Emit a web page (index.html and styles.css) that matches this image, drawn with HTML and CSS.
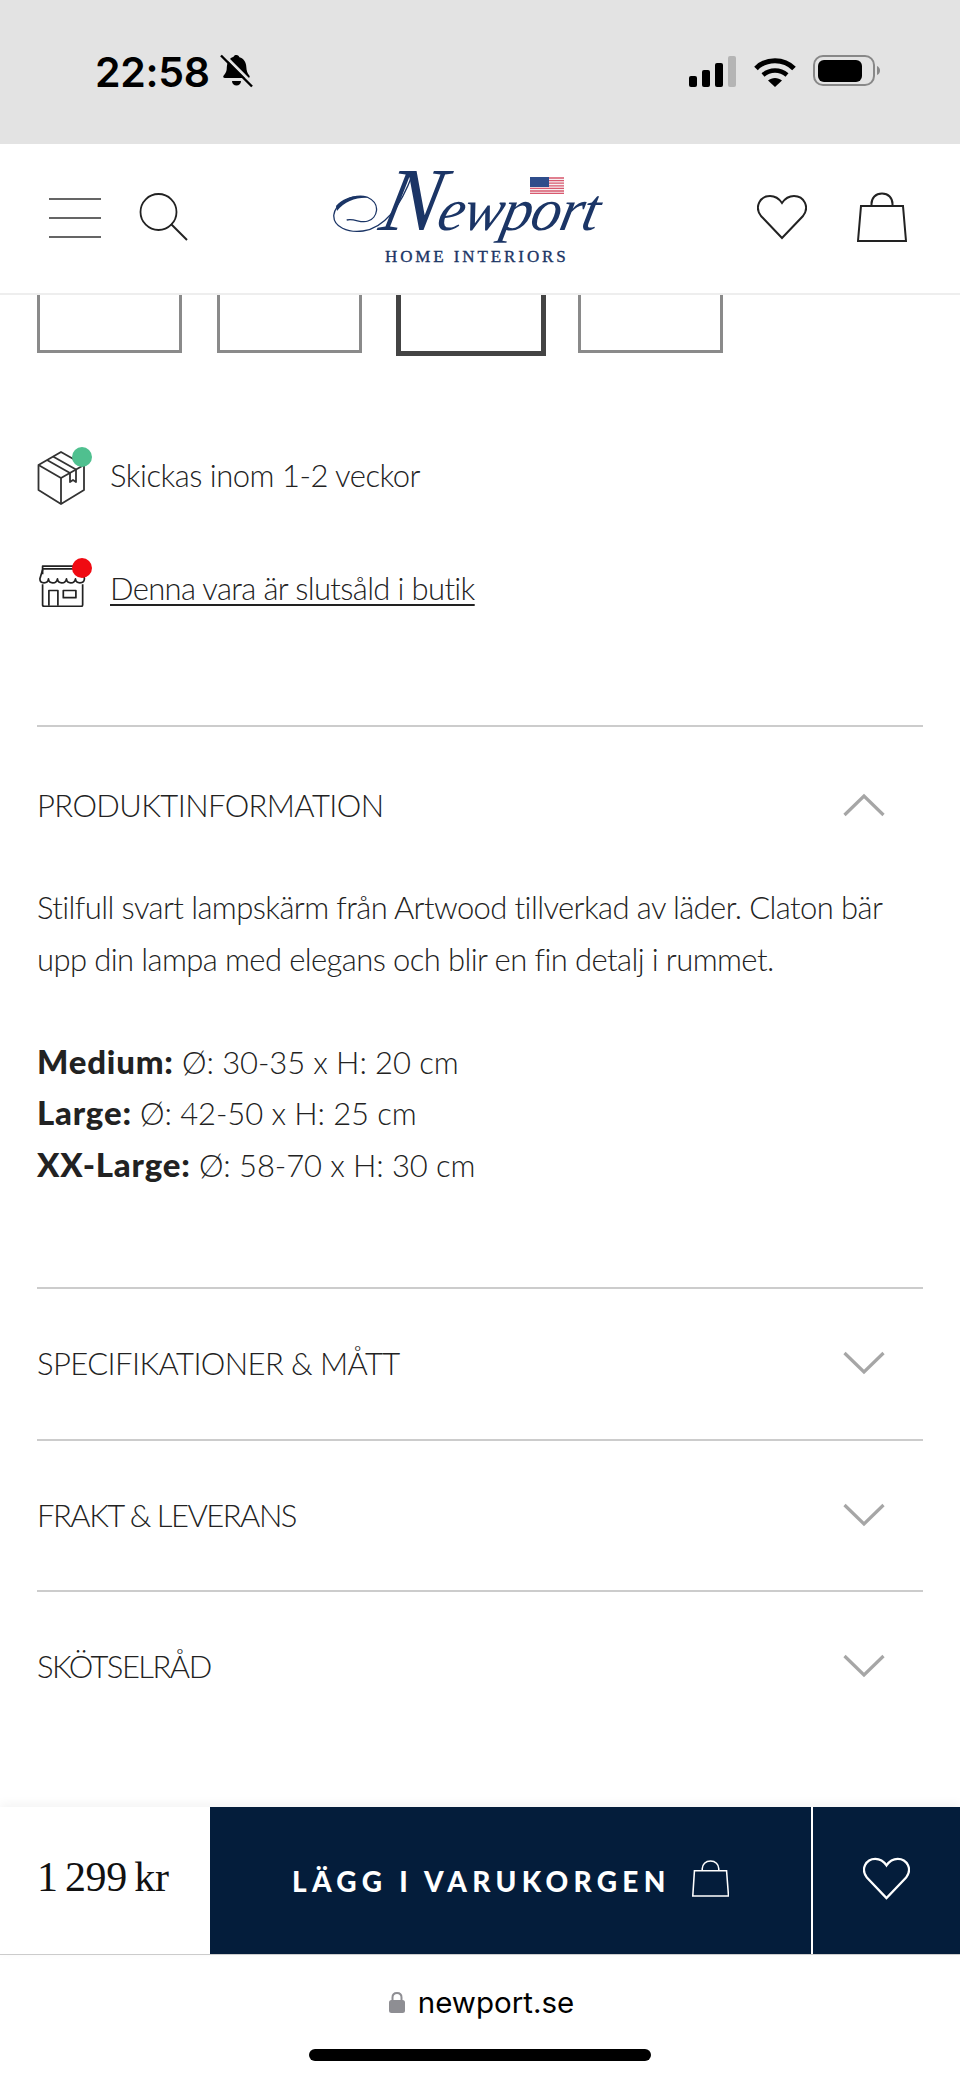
FILE: index.html
```html
<!DOCTYPE html>
<html lang="sv">
<head>
<meta charset="utf-8">
<title>Newport</title>
<link rel="stylesheet" href="styles.css">
</head>
<body>
<div class="page">
  <div class="status">
    <div class="status-left">
      <span class="time">22:58</span>
      <svg class="bell" viewBox="0 0 33 34"><path d="M16.500 1c1.600 0 2.600 1 2.900 2.300 4.300 1.200 6.600 4.900 6.900 9.500.2 4.200 1 6.400 3 8.800.8 1 .4 2.400-1 2.400H5c-1.700 0-2.300-1.400-1.300-2.500 1.800-2 2.700-3.600 3-6.200.3-3.500 0-10 6.900-12.500.3-1.300 1.300-1.800 2.900-1.800z" fill="#000"/><path d="M12 27h9c0 2.800-2 4.500-4.500 4.500S12 29.800 12 27z" fill="#000"/><path d="M3 0l31 31" stroke="#e3e3e3" stroke-width="3"/><path d="M1 1.500l31 31" stroke="#000" stroke-width="2.400"/></svg>
    </div>
    <div class="status-right">
      <svg class="signal" viewBox="0 0 48 31"><rect x="0" y="20" width="8" height="11" rx="2" fill="#000"/><rect x="13" y="14" width="8" height="17" rx="2" fill="#000"/><rect x="26" y="7" width="8" height="24" rx="2" fill="#000"/><rect x="39" y="0" width="8" height="31" rx="2" fill="#b5b5b5"/></svg>
      <svg class="wifi" viewBox="0 0 42 31"><path d="M2 12.500C12 2 30 2 40 12.500" fill="none" stroke="#000" stroke-width="5"/><path d="M9 19c7-6 17-6 24 0" fill="none" stroke="#000" stroke-width="4.500"/><path d="M14 24.500c4-3.500 10-3.500 14 0l-7 6.500z" fill="#000"/></svg>
      <svg class="battery" viewBox="0 0 67 32"><rect x="1" y="1" width="60" height="29" rx="9" fill="none" stroke="#888" stroke-width="2"/><rect x="5" y="5" width="44" height="22" rx="6" fill="#000"/><path d="M64 11c2 1 3 2.500 3 4.500S66 19 64 20z" fill="#888"/></svg>
    </div>
  </div>

  <header class="header">
    <div class="header-left">
      <svg class="menu-icon" viewBox="0 0 52 42"><path d="M0 1h52M0 20h52M0 39h52" stroke="#333" stroke-width="1.700"/></svg>
      <svg class="search-icon" viewBox="0 0 50 50"><circle cx="19.500" cy="19" r="18" fill="none" stroke="#222" stroke-width="1.800"/><path d="M32 31l16 16" stroke="#222" stroke-width="2"/></svg>
    </div>
    <div class="logo">
      <div class="logo-mark">
        <svg class="swash" viewBox="0 0 100 70"><path d="M13.700 49C22 47 28 53 35 50 44 47 49 33 34 26 20 22 2 33 .8 44 0 56 15 62 30 60 52 57 68 35 80 2" fill="none" stroke="#1b3566" stroke-width="1.300"/><path d="M3 35C12 25 26 23 36 27 24 26 12 30 4 40z" fill="#1b3566"/></svg>
        <span class="logo-name"><span class="logo-n">N</span>ewport</span>
        <svg class="flag" viewBox="0 0 34 17"><rect width="34" height="17" fill="#f6f0f2"/><path d="M0 1h34M0 3.600h34M0 6.200h34M0 8.800h34M0 11.400h34M0 14h34M0 16.400h34" stroke="#d9596f" stroke-width="1.300"/><rect width="19" height="10" fill="#2f4d8b"/></svg>
      </div>
      <div class="logo-sub">HOME INTERIORS</div>
    </div>
    <div class="header-right">
      <svg class="heart-icon" viewBox="0 0 50 46"><path d="M25 44L4 22C-3 13 3 2 13 2c5 0 9 2.500 12 7 3-4.500 7-7 12-7 10 0 16 11 9 20z" fill="none" stroke="#222" stroke-width="2"/></svg>
      <svg class="bag-icon" viewBox="0 0 50 50"><path d="M4 14h42l3 35H1z" fill="none" stroke="#222" stroke-width="2"/><path d="M14.500 14v-2c0-6 4-10.500 10.500-10.500S35.500 6 35.500 12v2" fill="none" stroke="#222" stroke-width="2"/></svg>
    </div>
  </header>

  <main class="main">
    <div class="thumbs">
      <div class="thumb"></div>
      <div class="thumb"></div>
      <div class="thumb thumb-active"></div>
      <div class="thumb"></div>
    </div>

    <div class="stock-row stock-first">
      <div class="stock-icon">
        <svg viewBox="0 0 54 60"><g fill="none" stroke="#333" stroke-width="1.800" stroke-linejoin="round"><path d="M24 5L1.500 18v25L24 57l23-14V18z"/><path d="M1.500 18L24 31l23-13M24 31v26"/><path d="M10 13l23 13M16 9.500l23 13"/><path d="M33 26v9l3-2 3 2v-12"/></g></svg>
        <span class="dot dot-green"></span>
      </div>
      <span class="stock-text">Skickas inom 1-2 veckor</span>
    </div>
    <div class="stock-row stock-second">
      <div class="stock-icon">
        <svg viewBox="0 0 54 60"><g transform="translate(2 -1) scale(.9)" fill="none" stroke="#222" stroke-width="1.900" stroke-linejoin="round"><path d="M4 17V8h44v9"/><path d="M4 11h44"/><path d="M4 12L1 22c0 6 9 6 9.500 0 .5 6 9 6 10 0 .5 6 9 6 10 0 .5 6 9 6 10 0 .5 6 9.500 6 10 0L48 12"/><path d="M4 28v23c0 1 1 1.500 2 1.500h41c1 0 1.500-.5 1.500-1.500V28"/><path d="M11 52V35h10v17"/><rect x="27" y="35" width="14" height="8"/></g></svg>
        <span class="dot dot-red"></span>
      </div>
      <a class="stock-text stock-link" href="#">Denna vara är slutsåld i butik</a>
    </div>

    <section class="acc acc-open">
      <div class="acc-head acc-head-open">
        <span class="acc-title">PRODUKTINFORMATION</span>
        <svg class="chev" viewBox="0 0 42 24"><path d="M1.500 22L21 3l19.500 19" fill="none" stroke="#a6a6a6" stroke-width="3.200"/></svg>
      </div>
      <div class="acc-body">
        <p class="para para-text">Stilfull svart lampskärm från Artwood tillverkad av läder. Claton bär<br>upp din lampa med elegans och blir en fin detalj i rummet.</p>
        <p class="para para-spec"><b>Medium:</b> Ø: 30-35 x H: 20 cm<br><b>Large:</b> Ø: 42-50 x H: 25 cm<br><b>XX-Large:</b> Ø: 58-70 x H: 30 cm</p>
      </div>
    </section>
    <section class="acc">
      <div class="acc-head">
        <span class="acc-title">SPECIFIKATIONER &amp; MÅTT</span>
        <svg class="chev" viewBox="0 0 42 24"><path d="M1.500 2L21 21 40.500 2" fill="none" stroke="#a6a6a6" stroke-width="3.200"/></svg>
      </div>
    </section>
    <section class="acc">
      <div class="acc-head">
        <span class="acc-title acc-title-tight">FRAKT &amp; LEVERANS</span>
        <svg class="chev" viewBox="0 0 42 24"><path d="M1.500 2L21 21 40.500 2" fill="none" stroke="#a6a6a6" stroke-width="3.200"/></svg>
      </div>
    </section>
    <section class="acc">
      <div class="acc-head">
        <span class="acc-title acc-title-tight">SKÖTSELRÅD</span>
        <svg class="chev" viewBox="0 0 42 24"><path d="M1.500 2L21 21 40.500 2" fill="none" stroke="#a6a6a6" stroke-width="3.200"/></svg>
      </div>
    </section>
  </main>

  <div class="buybar">
    <div class="price">1 299 kr</div>
    <div class="buy">
      <span class="buy-label">LÄGG I VARUKORGEN</span>
      <svg class="buy-bag" viewBox="0 0 38 38"><path d="M2.500 11h33l2 26H.8z" fill="none" stroke="#fff" stroke-width="1.600"/><path d="M10.500 11V9c0-4.500 3.500-8 8.500-8s8.500 3.500 8.500 8v2" fill="none" stroke="#fff" stroke-width="1.600"/></svg>
    </div>
    <div class="wish">
      <svg class="wish-heart" viewBox="0 0 50 46"><path d="M25 44L4 22C-3 13 3 2 13 2c5 0 9 2.500 12 7 3-4.500 7-7 12-7 10 0 16 11 9 20z" fill="none" stroke="#fff" stroke-width="2.400"/></svg>
    </div>
  </div>

  <div class="urlbar">
    <div class="url">
      <svg class="lock" viewBox="0 0 16 22"><path d="M3.500 10V6.500C3.500 3.500 5.500 2 8 2s4.500 1.500 4.500 4.500V10" fill="none" stroke="#8e8e93" stroke-width="2"/><rect y="9" width="16" height="13" rx="2.500" fill="#8e8e93"/></svg>
      <span class="url-text">newport.se</span>
    </div>
    <div class="home-bar"></div>
  </div>
</div>
</body>
</html>
```
FILE: styles.css
```css
* { box-sizing: border-box; }
html, body { margin: 0; padding: 0; }
body { background: #fff; font-family: "Lato", "Liberation Sans", sans-serif; color: #222; }
svg { display: block; flex: none; }

.page { width: 960px; height: 2081px; display: flex; flex-direction: column; overflow: hidden; }

.status { height: 144px; background: #e3e3e3; display: flex; justify-content: space-between; padding: 52px 80px 0 95px; flex: none; }
.status-left { display: flex; align-items: flex-start; gap: 10px; }
.time { font-family: "Inter", sans-serif; font-weight: 600; font-size: 41px; line-height: 40px; color: #000; letter-spacing: -0.3px; }
.bell { width: 33px; height: 34px; margin-top: 2px; }
.status-right { display: flex; align-items: flex-start; }
.signal { width: 48px; height: 31px; margin-top: 4px; }
.wifi { width: 42px; height: 31px; margin: 4px 0 0 17px; }
.battery { width: 67px; height: 32px; margin: 3px 0 0 17px; }

.header { height: 151px; flex: none; display: flex; align-items: flex-start; border-bottom: 2px solid #eee; padding-left: 49px; background: #fff; }
.header-left { display: flex; align-items: flex-start; width: 284px; padding-top: 54px; }
.menu-icon { width: 52px; height: 42px; }
.search-icon { width: 50px; height: 50px; margin: -5px 0 0 38px; }
.logo { width: 300px; display: flex; flex-direction: column; align-items: flex-start; }
.logo-mark { position: relative; height: 100px; width: 100%; }
.swash { position: absolute; left: 0; top: 27px; width: 100px; height: 70px; }
.logo-name { position: absolute; left: 40px; top: 26px; font-family: "Liberation Serif", serif; font-style: italic; font-size: 60px; line-height: 80px; color: #1b3566; letter-spacing: -1.200px; white-space: nowrap; transform: skewX(-12deg); transform-origin: 0 100%; }
.logo-n { font-size: 90px; line-height: 0; letter-spacing: -2px; }
.flag { position: absolute; left: 197px; top: 33px; width: 34px; height: 17px; }
.logo-sub { margin: 6px 0 0 52px; font-family: "Liberation Serif", serif; font-weight: 400; -webkit-text-stroke: .35px #1b3566; font-size: 17px; line-height: 14px; letter-spacing: 2.900px; color: #1b3566; white-space: nowrap; }
.header-right { display: flex; align-items: flex-start; padding: 50px 0 0 124px; }
.heart-icon { width: 50px; height: 46px; }
.bag-icon { width: 50px; height: 50px; margin: -2px 0 0 50px; }

.main { flex: 1; padding: 0 37px; min-height: 0; }
.thumbs { display: flex; align-items: flex-start; gap: 35px; }
.thumb { width: 145px; height: 58px; border: 3px solid #8a8a8a; border-top: 0; }
.thumb-active { width: 150px; height: 61px; border: 5px solid #444; border-top: 0; margin: 0 -3px 0 -1px; }

.stock-row { display: flex; align-items: center; gap: 20px; height: 60px; }
.stock-first { margin-top: 91px; }
.stock-second { margin-top: 53px; }
.stock-icon { position: relative; width: 54px; height: 60px; flex: none; }
.stock-icon svg { width: 54px; height: 60px; }
.dot { position: absolute; left: 35px; width: 20px; height: 20px; border-radius: 50%; }
.dot-green { top: 0; background: #4fc08f; }
.dot-red { top: -2px; background: #f00a12; }
.stock-text { font-weight: 300; font-size: 31px; line-height: 40px; color: #222; letter-spacing: -0.5px; white-space: nowrap; margin: -5px 0 0 -1px; }
.stock-link { letter-spacing: -0.650px; text-decoration: underline; text-underline-offset: 4px; text-decoration-thickness: 2px; }

.acc { border-top: 2px solid #ccc; }
.acc-open { margin-top: 105px; padding-bottom: 96px; }
.acc-head { height: 149.500px; display: flex; align-items: center; justify-content: space-between; padding: 0 38px 1px 0; }
.acc-head-open { height: 155px; padding-bottom: 0; }
.acc-title { font-weight: 300; font-size: 31px; letter-spacing: -0.600px; color: #222; }
.acc-title-tight { letter-spacing: -1.500px; }
.chev { width: 42px; height: 24px; }
.para { margin: 0 0 51.500px; font-weight: 300; font-size: 31px; line-height: 51.500px; color: #222; white-space: nowrap; }
.para-text { letter-spacing: -0.600px; }
.para-spec { letter-spacing: -0.100px; margin-bottom: 0; }
.para b { font-weight: 900; font-size: 33px; line-height: 1; letter-spacing: 0.800px; }

.buybar { height: 148px; flex: none; display: flex; background: #fff; box-shadow: 0 -3px 10px rgba(0,0,0,.05); border-bottom: 1px solid #ccc; position: relative; }
.price { width: 210px; display: flex; align-items: center; padding: 0 0 8px 37px; font-family: "Liberation Serif", serif; font-size: 42px; letter-spacing: -0.300px; word-spacing: -3px; color: #111; white-space: pre; }
.buy { width: 601px; background: #041d3b; display: flex; align-items: center; gap: 21px; padding-left: 82px; }
.buy-label { font-weight: 900; font-size: 28px; letter-spacing: 5.300px; color: #fff; white-space: nowrap; }
.buy-bag { width: 37px; height: 37px; margin-top: -4px; }
.wish { flex: 1; margin-left: 2px; background: #041d3b; display: flex; align-items: center; justify-content: center; }
.wish-heart { width: 47px; height: 43px; margin-top: -4px; }

.urlbar { height: 126px; flex: none; background: #fff; display: flex; flex-direction: column; align-items: center; }
.url { display: flex; align-items: center; gap: 13px; height: 40px; margin-top: 27px; padding-left: 3px; }
.lock { width: 16px; height: 22px; }
.url-text { font-family: "Inter", sans-serif; font-size: 29.500px; line-height: 40px; color: #000; }
.home-bar { width: 342px; height: 12px; border-radius: 6px; background: #000; margin-top: 27px; }
```
